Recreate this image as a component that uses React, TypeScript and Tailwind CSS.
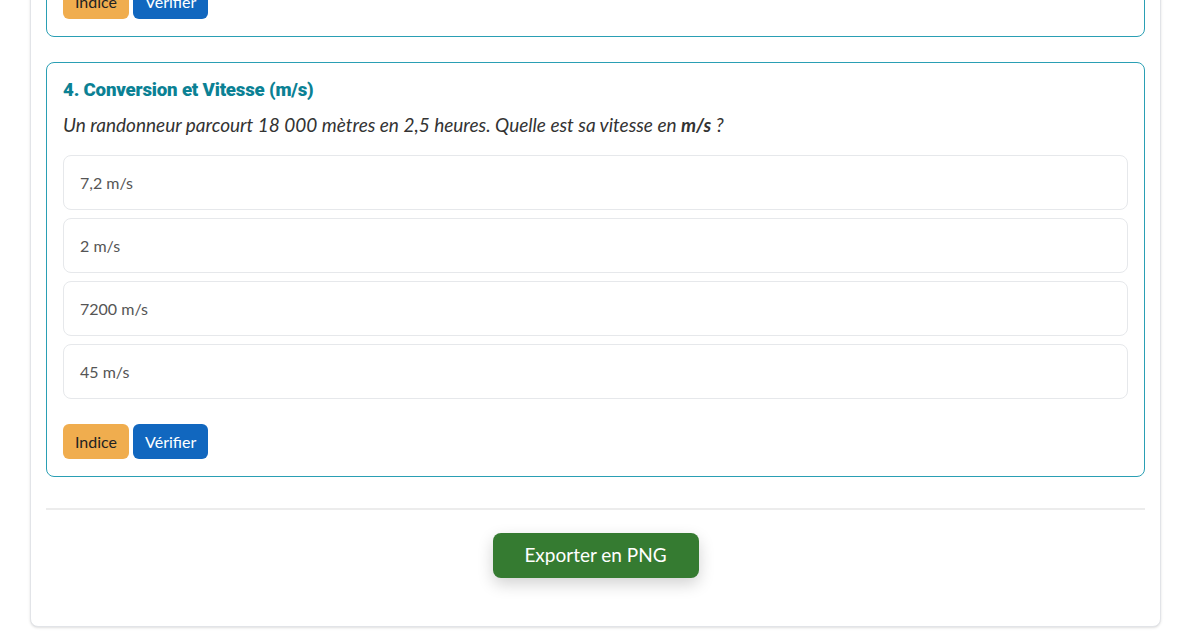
import React from "react";

type Question = {
  n: number;
  title: string;
  prompt: React.ReactNode;
  options: string[];
};

const questions: Question[] = [
  {
    n: 3,
    title: "3. Calcul de la durée",
    prompt: <>Un train roule à 120 km/h pendant 240 km. Combien de temps dure le trajet ?</>,
    options: ["2 h", "1,5 h", "3 h", "2,5 h"],
  },
  {
    n: 4,
    title: "4. Conversion et Vitesse (m/s)",
    prompt: (
      <>
        Un randonneur parcourt 18 000 mètres en 2,5 heures. Quelle est sa vitesse en{" "}
        <b className="font-bold">m/s</b> ?
      </>
    ),
    options: ["7,2 m/s", "2 m/s", "7200 m/s", "45 m/s"],
  },
];

function QuestionCard({ q }: { q: Question }) {
  return (
    <div className="border-[1.5px] border-[#2a9fb4] rounded-lg px-4 pt-[15px] pb-[17px] bg-white">
      <h3 className="text-[18.7px] leading-[24px] font-black text-[#0b8194] font-['Roboto',sans-serif] tracking-[-0.2px] mb-[9px]">
        {q.title}
      </h3>
      <p className="text-[19px] leading-[28px] italic text-[#333] mb-4">{q.prompt}</p>
      <div className="flex flex-col gap-2">
        {q.options.map((o) => (
          <div
            key={o}
            className="h-[55px] flex items-center px-4 border-[1.5px] border-[#e6e8eb] rounded-lg text-[16px] text-[#555]"
          >
            {o}
          </div>
        ))}
      </div>
      <div className="flex gap-1 mt-[25px]">
        <button className="h-[35px] px-[12px] rounded-md bg-[#f0ad4e] text-[#222] text-[16px]">Indice</button>
        <button className="h-[35px] px-[12px] rounded-md bg-[#1167bf] text-white text-[16px]">Vérifier</button>
      </div>
    </div>
  );
}

export default function App() {
  return (
    <div className="h-[642px] overflow-hidden bg-white font-['Lato',sans-serif]">
      <div className="mt-[-395px] pl-[30px]">
        <div className="w-[1131px] border border-[#e2e4e8] rounded-lg shadow-sm bg-white px-[15px] pt-4 pb-[48px]">
          <div className="flex flex-col gap-[25px]">
            {questions.map((q) => (
              <QuestionCard key={q.n} q={q} />
            ))}
          </div>
          <hr className="mt-[31px] border-t-2 border-[#ececec]" />
          <div className="flex justify-center mt-[23px]">
            <button className="w-[206px] h-[45px] rounded-lg bg-[#357b31] text-white text-[19px] shadow-[0_6px_16px_rgba(0,0,0,0.18)]">
              Exporter en PNG
            </button>
          </div>
        </div>
      </div>
    </div>
  );
}
